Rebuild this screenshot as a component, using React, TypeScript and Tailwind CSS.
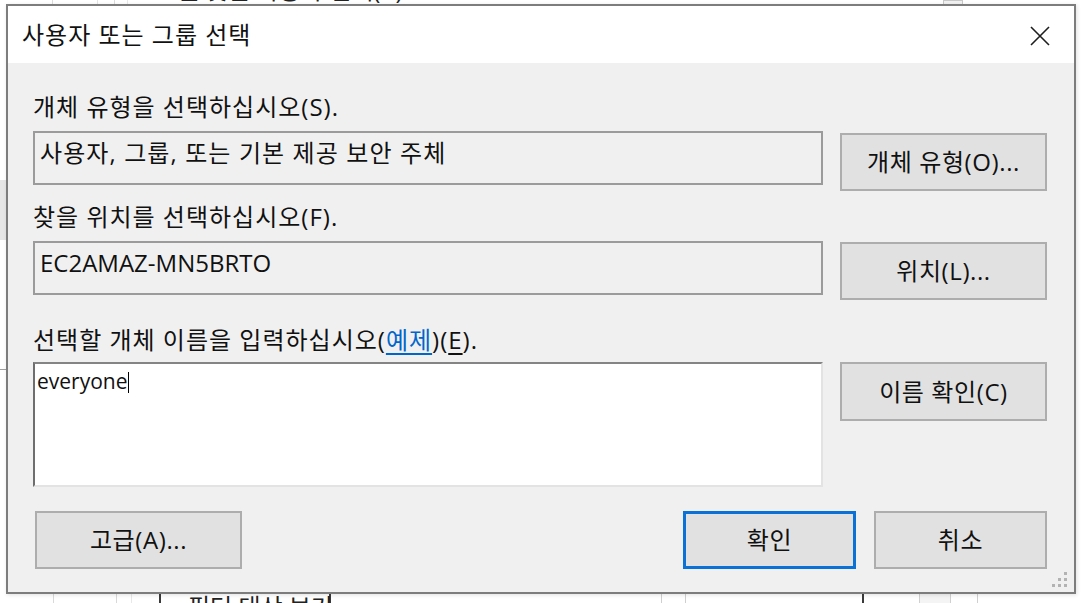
import React from "react";

const font = "font-['Open_Sans','Noto_Sans_CJK_KR',sans-serif]";

const Button = ({ label, focused = false, className = "" }: { label: React.ReactNode; focused?: boolean; className?: string }) => (
  <div
    className={`flex items-center justify-center bg-[#e1e1e1] text-[24px] leading-[32px] tracking-[0.6px] text-[#111] ${
      focused ? "border-[3px] border-[#0a72d6]" : "border-2 border-[#adadad]"
    } ${className}`}
  >
    {label}
  </div>
);

const ReadonlyBox = ({ value, className = "" }: { value: string; className?: string }) => (
  <div className={`h-[54px] w-[790px] border-2 border-[#9b9b9b] bg-[#f0f0f0] pl-[5px] pt-[4px] text-[24px] leading-[32px] text-[#111] ${className}`}>
    {value}
  </div>
);

const Label = ({ children, className = "" }: { children: React.ReactNode; className?: string }) => (
  <div className={`text-[24px] leading-[32px] tracking-[1px] text-[#111] ${className}`}>{children}</div>
);

// window sitting behind the dialog
const Backdrop = () => (
  <div className="flex h-full w-full flex-col">
    <div className="flex h-[30px]">
      <div className="w-[53px] border-r border-[#dcdcdc]" />
      <div className="w-[45px] border-r border-[#e4e4e4]" />
      <div className="w-[17px] border-r border-[#dcdcdc]" />
      <div className="w-[13px] border-r border-[#e8e8e8]" />
      <div className="-mt-[26px] whitespace-nowrap pl-[50px] text-[24px] leading-[32px] text-[#222]">를 찾는 사용자 선택(A).</div>
      <div className="flex-1" />
      <div className="mr-[125px] h-[5px] w-[20px] border border-[#c8c8c8] bg-[#f2f2f2]" />
    </div>
    <div className="flex flex-1">
      <div className="flex w-[7px] flex-col">
        <div className="h-[150px]" />
        <div className="h-[60px] bg-[#e6e6e6]" />
        <div className="h-[130px] border-b border-[#a0a0a0]" />
      </div>
    </div>
    <div className="flex h-[30px]">
      <div className="w-[54px] border-r border-[#d9d9d9]" />
      <div className="w-[63px] border-r border-[#d9d9d9]" />
      <div className="w-[15px] border-r border-[#e8e8e8]" />
      <div className="w-[29px] border-r-2 border-[#3a3a3a]" />
      <div className="flex w-[170px] flex-col justify-end border-r-2 border-[#3a3a3a] pl-[27px]">
        <div className="-mb-[20px] whitespace-nowrap text-[24px] leading-[32px] text-[#222]">필터 대상 보기</div>
      </div>
      <div className="w-[330px]" />
      <div className="w-[25px] border-x border-[#cfcfcf]" />
      <div className="flex-1" />
      <div className="w-[24px] border-r-2 border-[#3a3a3a]" />
      <div className="w-[56px] border-r border-[#d0d0d0]" />
      <div className="w-[30px] bg-[#f4f4f4]" />
      <div className="w-[28px] border-x border-[#d0d0d0]" />
      <div className="w-[110px]" />
    </div>
  </div>
);

export default function App() {
  return (
    <div className={`relative h-[603px] w-[1088px] overflow-hidden bg-white ${font}`}>
      <Backdrop />

      <div className="absolute left-[6px] top-[4px] flex h-[590px] w-[1070px] flex-col border-2 border-[#7d7d7d] bg-[#f0f0f0] shadow-[1px_1px_4px_rgba(0,0,0,0.12)]">
        {/* title bar */}
        <div className="flex h-[57px] items-center justify-between bg-white pl-[14px] pr-[24px]">
          <span className="text-[24px] leading-[32px] tracking-[1px] text-[#111]">사용자 또는 그룹 선택</span>
          <svg width="20" height="20" viewBox="0 0 20 20" className="mt-[2px]">
            <path d="M1 1 L19 19 M19 1 L1 19" stroke="#1e1e1e" strokeWidth="1.6" fill="none" />
          </svg>
        </div>

        {/* body */}
        <div className="flex flex-1 flex-col pl-[25px] pr-[27px] pt-[28px]">
          <Label>개체 유형을 선택하십시오(S).</Label>
          <div className="mt-[8px] flex items-start gap-[17px]">
            <ReadonlyBox value="사용자, 그룹, 또는 기본 제공 보안 주체" className="tracking-[1.1px]" />
            <Button label="개체 유형(O)..." className="mt-[2px] h-[58px] w-[207px]" />
          </div>

          <Label className="mt-[10px]">찾을 위치를 선택하십시오(F).</Label>
          <div className="mt-[8px] flex items-start gap-[17px]">
            <ReadonlyBox value="EC2AMAZ-MN5BRTO" />
            <Button label="위치(L)..." className="mt-[1px] h-[58px] w-[207px]" />
          </div>

          <Label className="mt-[24px]">
            선택할 개체 이름을 입력하십시오(
            <span className="text-[#0066cc] underline underline-offset-[4px]">예제</span>)(
            <span className="underline underline-offset-[4px]">E</span>).
          </Label>
          <div className="mt-[6px] flex items-start gap-[17px]">
            <div className="h-[125px] w-[790px] border-2 border-b-[#e3e3e3] border-l-[#6e6e6e] border-r-[#e3e3e3] border-t-[#848484] bg-white pl-[2px] pt-[3px]">
              <span className="text-[21px] leading-[28px] text-[#111]">everyone</span>
              <span className="ml-[1px] inline-block h-[21px] w-px translate-y-[4px] bg-black" />
            </div>
            <Button label="이름 확인(C)" className="h-[59px] w-[207px]" />
          </div>

          <div className="mt-[24px] flex items-center">
            <Button label="고급(A)..." className="ml-[2px] h-[58px] w-[207px]" />
            <div className="flex-1" />
            <Button label="확인" focused className="h-[58px] w-[173px]" />
            <Button label="취소" className="ml-[18px] h-[58px] w-[173px]" />
          </div>
        </div>

        {/* size grip */}
        <svg width="18" height="18" viewBox="0 0 18 18" className="absolute bottom-[3px] right-[5px]">
          <g fill="#b3b3b3">
            <rect x="13" y="1" width="3" height="3" />
            <rect x="7" y="7" width="3" height="3" />
            <rect x="13" y="7" width="3" height="3" />
            <rect x="1" y="13" width="3" height="3" />
            <rect x="7" y="13" width="3" height="3" />
            <rect x="13" y="13" width="3" height="3" />
          </g>
        </svg>
      </div>
    </div>
  );
}
